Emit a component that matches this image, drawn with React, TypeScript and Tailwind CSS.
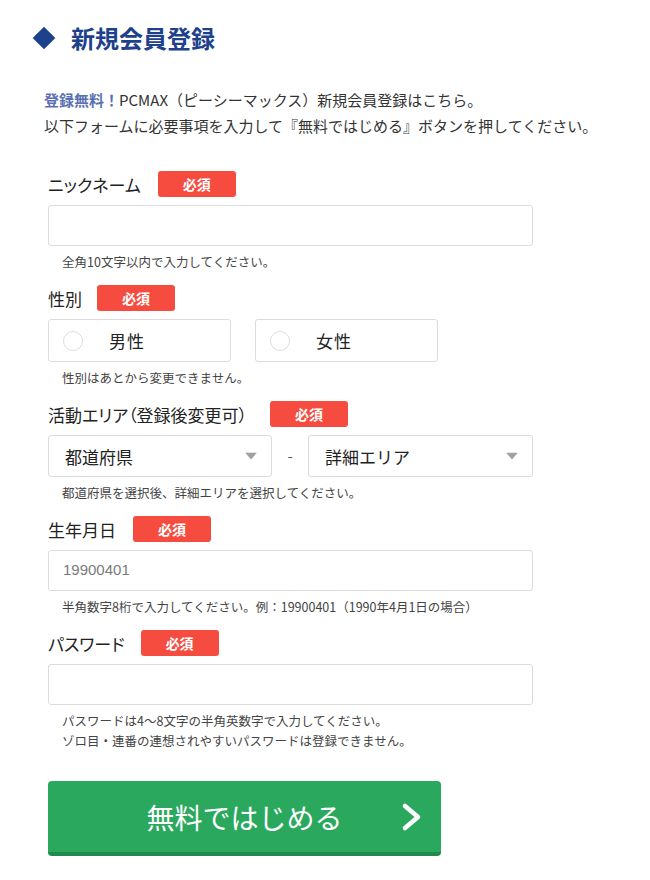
import React from "react";

const FONT = { fontFamily: '"Noto Sans CJK JP", "Noto Sans", sans-serif' };

function Badge({ ml }: { ml: string }) {
  return (
    <span
      className={`${ml} inline-flex h-[26px] w-[78px] items-center justify-center rounded-[3px] bg-[#f54c3f] text-[14px] font-bold leading-none text-white`}
    >
      必須
    </span>
  );
}

function Label({ text, ml }: { text: string; ml: string }) {
  return (
    <div className="flex h-[26px] items-center">
      <span className="text-[17px] leading-none text-[#222] [font-feature-settings:'palt']">{text}</span>
      <Badge ml={ml} />
    </div>
  );
}

function Hint({ children }: { children: React.ReactNode }) {
  return <p className="ml-[14px] mt-[6px] text-[12.5px] leading-[20px] text-[#444]">{children}</p>;
}

function TextBox({ placeholder }: { placeholder?: string }) {
  return (
    <div className="mt-[8px] flex h-[41px] w-[485px] items-center rounded-[3px] border border-[#dcdcdc] bg-white px-[14px]">
      {placeholder && (
        <span className="text-[15px] text-[#7a7a7a]" style={{ fontFamily: '"Liberation Sans", Arial, sans-serif' }}>
          {placeholder}
        </span>
      )}
    </div>
  );
}

function Caret() {
  return (
    <svg width="12" height="7" viewBox="0 0 12 7" className="absolute right-[14px] top-1/2 -translate-y-1/2">
      <path d="M0 0 L12 0 L6 7 Z" fill="#a0a0a0" />
    </svg>
  );
}

function Select({ text, className }: { text: string; className: string }) {
  return (
    <div className={`${className} relative flex h-[42px] items-center rounded-[3px] border border-[#dcdcdc] bg-white pl-[16px]`}>
      <span className="text-[17px] leading-none text-[#222]">{text}</span>
      <Caret />
    </div>
  );
}

function Radio({ text }: { text: string }) {
  return (
    <div className="flex h-[43px] w-[183px] items-center rounded-[3px] border border-[#dcdcdc] bg-white pl-[14px]">
      <span className="h-[20px] w-[20px] rounded-full border border-[#dddddd]" />
      <span className="ml-[26px] text-[17px] leading-none tracking-[1px] text-[#222]">{text}</span>
    </div>
  );
}

export default function App() {
  return (
    <div className="min-h-[880px] w-[650px] bg-white pt-[22px]" style={FONT}>
      <div className="flex h-[32px] items-center pl-[36px]">
        <span className="h-[16px] w-[16px] rotate-45 bg-[#1d418b]" />
        <h1 className="ml-[19px] text-[24px] font-bold leading-none text-[#1d418b]">新規会員登録</h1>
      </div>

      <div className="ml-[44px] mt-[33px] text-[15px] leading-[26px] text-[#333]">
        <p>
          <span className="font-bold text-[#5a70b3]">登録無料！</span>PCMAX（ピーシーマックス）新規会員登録はこちら。
        </p>
        <p>以下フォームに必要事項を入力して『無料ではじめる』ボタンを押してください。</p>
      </div>

      <div className="ml-[48px] mt-[32px]">
        <Label text="ニックネーム" ml="ml-[17px]" />
        <TextBox />
        <Hint>全角10文字以内で入力してください。</Hint>

        <div className="mt-[13px]">
          <Label text="性別" ml="ml-[15px]" />
          <div className="mt-[8px] flex gap-[24px]">
            <Radio text="男性" />
            <Radio text="女性" />
          </div>
          <Hint>性別はあとから変更できません。</Hint>
        </div>

        <div className="mt-[13px]">
          <Label text="活動エリア（登録後変更可）" ml="ml-[23px]" />
          <div className="mt-[8px] flex w-[485px] items-center">
            <Select text="都道府県" className="w-[224px]" />
            <span className="w-[36px] text-center text-[15px] text-[#555]">-</span>
            <Select text="詳細エリア" className="flex-1" />
          </div>
          <Hint>都道府県を選択後、詳細エリアを選択してください。</Hint>
        </div>

        <div className="mt-[13px]">
          <Label text="生年月日" ml="ml-[17px]" />
          <TextBox placeholder="19900401" />
          <Hint>半角数字8桁で入力してください。例：19900401（1990年4月1日の場合）</Hint>
        </div>

        <div className="mt-[13px]">
          <Label text="パスワード" ml="ml-[16px]" />
          <TextBox />
          <div className="ml-[14px] mt-[6px] text-[12.5px] leading-[20px] text-[#444]">
            <p>パスワードは4〜8文字の半角英数字で入力してください。</p>
            <p>ゾロ目・連番の連想されやすいパスワードは登録できません。</p>
          </div>
        </div>

        <button className="relative mt-[30px] flex h-[75px] w-[393px] items-center justify-center rounded-[4px] border-b-[4px] border-[#1f8a4b] bg-[#2aa95e] text-white">
          <span className="text-[28px] leading-none">無料ではじめる</span>
          <svg width="22" height="30" viewBox="0 0 22 30" className="absolute left-[353px] top-[21px]">
            <path d="M4 4 L17 15 L4 26" stroke="white" strokeWidth="4.5" fill="none" strokeLinecap="round" strokeLinejoin="round" />
          </svg>
        </button>
      </div>
    </div>
  );
}
